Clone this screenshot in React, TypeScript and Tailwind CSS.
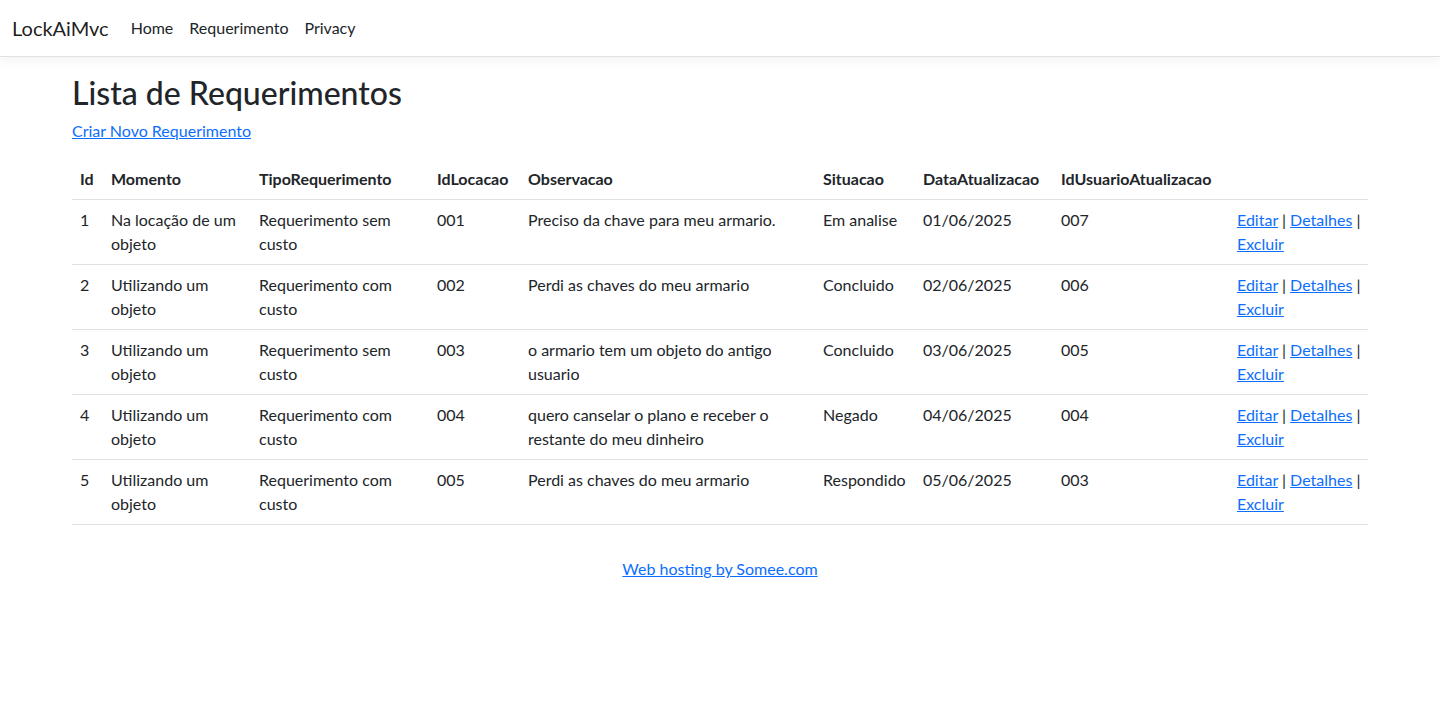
const rows = [
  { id: 1, momento: "Na locação de um objeto", tipo: "Requerimento sem custo", loc: "001", obs: "Preciso da chave para meu armario.", sit: "Em analise", data: "01/06/2025", user: "007" },
  { id: 2, momento: "Utilizando um objeto", tipo: "Requerimento com custo", loc: "002", obs: "Perdi as chaves do meu armario", sit: "Concluido", data: "02/06/2025", user: "006" },
  { id: 3, momento: "Utilizando um objeto", tipo: "Requerimento sem custo", loc: "003", obs: "o armario tem um objeto do antigo usuario", sit: "Concluido", data: "03/06/2025", user: "005" },
  { id: 4, momento: "Utilizando um objeto", tipo: "Requerimento com custo", loc: "004", obs: "quero canselar o plano e receber o restante do meu dinheiro", sit: "Negado", data: "04/06/2025", user: "004" },
  { id: 5, momento: "Utilizando um objeto", tipo: "Requerimento com custo", loc: "005", obs: "Perdi as chaves do meu armario", sit: "Respondido", data: "05/06/2025", user: "003" },
];

const headers = ["Id", "Momento", "TipoRequerimento", "IdLocacao", "Observacao", "Situacao", "DataAtualizacao", "IdUsuarioAtualizacao", ""];
const widths = ["w-[31px]", "w-[148px]", "w-[178px]", "w-[91px]", "w-[295px]", "w-[100px]", "w-[138px]", "w-[176px]", "w-[139px]"];

const App = () => {
  return (
    <div className="min-h-screen bg-white text-[#212529] text-base leading-6 font-['Segoe_UI','Lato',sans-serif]">
      <header className="h-[57px] border-b border-[#dee2e6] shadow-[0_4px_12px_rgba(0,0,0,0.05)] mb-4">
        <nav className="h-full px-3 flex items-center">
          <a href="#" className="text-xl text-black/90 mr-[14px] leading-[30px]">LockAiMvc</a>
          <ul className="flex">
            <li><a href="#" className="px-2 py-2 text-[#212529]">Home</a></li>
            <li><a href="#" className="px-2 py-2 text-[#212529]">Requerimento</a></li>
            <li><a href="#" className="px-2 py-2 text-[#212529]">Privacy</a></li>
          </ul>
        </nav>
      </header>

      <main className="max-w-[1320px] mx-auto px-3 pb-3">
        <h1 className="text-[32px] font-medium leading-[1.2] mb-2 pt-px">Lista de Requerimentos</h1>
        <p className="mb-4 -mt-px">
          <a href="#" className="text-[#0d6efd] underline">Criar Novo Requerimento</a>
        </p>
        <table className="w-full table-fixed border-collapse mb-4">
          <thead>
            <tr>
              {headers.map((h, i) => (
                <th key={i} className={`${widths[i]} text-left font-bold p-2 border-b border-[#dee2e6]`}>{h}</th>
              ))}
            </tr>
          </thead>
          <tbody>
            {rows.map((r) => (
              <tr key={r.id} className="align-top">
                <td className="p-2 border-b border-[#dee2e6]">{r.id}</td>
                <td className="p-2 border-b border-[#dee2e6]">{r.momento}</td>
                <td className="p-2 border-b border-[#dee2e6]">{r.tipo}</td>
                <td className="p-2 border-b border-[#dee2e6]">{r.loc}</td>
                <td className="p-2 border-b border-[#dee2e6]">{r.obs}</td>
                <td className="p-2 border-b border-[#dee2e6]">{r.sit}</td>
                <td className="p-2 border-b border-[#dee2e6]">{r.data}</td>
                <td className="p-2 border-b border-[#dee2e6]">{r.user}</td>
                <td className="p-2 border-b border-[#dee2e6]">
                  <span className="whitespace-nowrap">
                    <a href="#" className="text-[#0d6efd] underline">Editar</a> |{" "}
                    <a href="#" className="text-[#0d6efd] underline">Detalhes</a> |
                  </span>{" "}
                  <a href="#" className="text-[#0d6efd] underline">Excluir</a>
                </td>
              </tr>
            ))}
          </tbody>
        </table>
      </main>

      <div className="text-center mt-1">
        <a href="#" className="text-[#0d6efd] underline">Web hosting by Somee.com</a>
      </div>
    </div>
  );
};

export default App;
